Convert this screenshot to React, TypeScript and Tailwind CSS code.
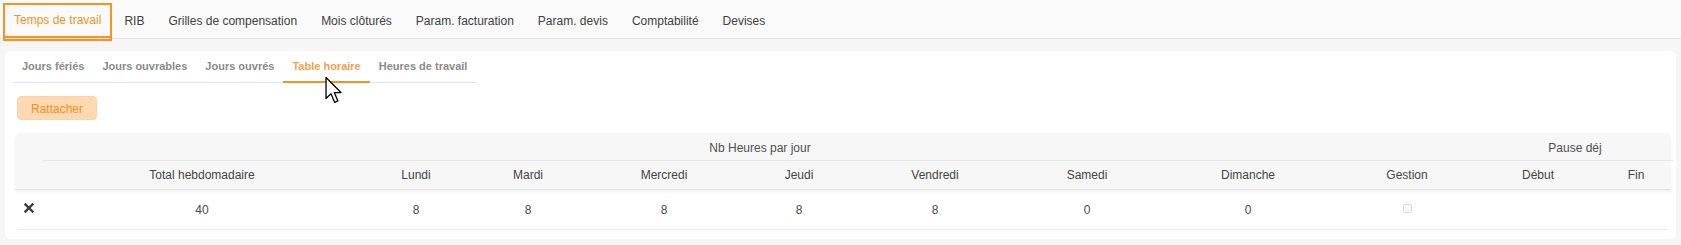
import { useState } from 'react';

const topTabs = ['RIB', 'Grilles de compensation', 'Mois clôturés', 'Param. facturation', 'Param. devis', 'Comptabilité', 'Devises'];
const subTabs = ['Jours fériés', 'Jours ouvrables', 'Jours ouvrés', 'Table horaire', 'Heures de travail'];
const days = ['Lundi', 'Mardi', 'Mercredi', 'Jeudi', 'Vendredi', 'Samedi', 'Dimanche'];
const hours = [8, 8, 8, 8, 8, 0, 0];

// widths taken from the column centres of the reference
const cols = 'grid grid-cols-[28px_318px_110px_114px_158px_112px_160px_144px_178px_140px_122px_74px]';

const Cursor = () => (
    <svg className="absolute left-[324px] top-[76px]" width="20" height="29" viewBox="0 0 13 20">
        <path d="M1 1 L1 15.5 L4.4 12.3 L7 18.2 L9.2 17.2 L6.7 11.4 L11.3 11.4 Z" fill="#fff" stroke="#000" strokeWidth="0.9" strokeLinejoin="round" />
    </svg>
);

export default function App() {
    const [active, setActive] = useState('Table horaire');

    return (
        <div className="relative min-h-[245px] bg-[#f6f6f6] font-['Liberation_Sans',Arial,sans-serif] text-[12px] text-[#444]">
            {/* top settings tabs */}
            <div className="flex h-[39px] items-start border-b border-[#e4e4e4] bg-[#fafafa] pl-[3px]">
                <div className="relative z-10 mt-[3px] h-[38px] border-2 border-[#f7931e] pb-px">
                    <span className="flex h-full items-center border-b-[2px] border-[#f7931e] px-[9px] pb-[2px] font-medium text-[#f39322]">
                        Temps de travail
                    </span>
                </div>
                {topTabs.map(t => (
                    <span key={t} className="flex h-[38px] items-center px-3 pt-[3px] text-[#404040]">{t}</span>
                ))}
            </div>

            <div className="px-[5px] pt-3 pb-[7px]">
                <div className="rounded-md bg-white pl-2 pr-[5px] pb-[9px]">
                    {/* sub tabs */}
                    <div className="inline-flex border-b border-[#e3e3e3]">
                        {subTabs.map(t => (
                            <button
                                key={t}
                                onClick={() => setActive(t)}
                                className={`-mb-px flex h-[32px] items-center px-[9px] pt-px text-[11px] font-bold ${
                                    t === active ? 'border-b-2 border-[#f7931e] text-[#f5a04b]' : 'border-b-2 border-transparent text-[#8a8a8a]'
                                }`}
                            >
                                {t}
                            </button>
                        ))}
                    </div>

                    <div className="ml-[4px] mt-[13px]">
                        <button className="h-[24px] rounded-[4px] border border-[#fdd3a6] bg-[#fed9b2] px-[13px] pt-px text-[12px] text-[#f3901c]">
                            Rattacher
                        </button>
                    </div>

                    {/* hours table */}
                    <div className="ml-[2px] mt-[13px]">
                        <div className="rounded-t-md border-b border-[#e2e2e2] bg-[#f7f7f7] shadow-[0_2px_3px_rgba(0,0,0,0.05)]">
                            <div className={`${cols} grid-rows-[28px_28px]`}>
                                <div className="row-span-2" />
                                <div className="col-span-9 flex items-center justify-center border-b border-[#e6e6e6] pt-[2px] text-[#505050]">Nb Heures par jour</div>
                                <div className="col-span-2 flex items-center justify-center border-b border-[#e6e6e6] pt-[2px] text-[#505050]">Pause déj</div>
                                <div className="flex items-center justify-center">Total hebdomadaire</div>
                                {days.map(d => (
                                    <div key={d} className="flex items-center justify-center">{d}</div>
                                ))}
                                <div className="flex items-center justify-center">Gestion</div>
                                <div className="flex items-center justify-center">Début</div>
                                <div className="flex items-center justify-center">Fin</div>
                            </div>
                        </div>

                        <div className={`${cols} h-[39px] items-center text-[#4a4a4a]`}>
                            <div className="flex justify-center pb-[3px]">
                                <svg width="10" height="10" viewBox="0 0 10 10">
                                    <path d="M1.5 1.5 L8.5 8.5 M8.5 1.5 L1.5 8.5" stroke="#3d3d3d" strokeWidth="2.4" strokeLinecap="square" />
                                </svg>
                            </div>
                            <div className="text-center">40</div>
                            {hours.map((h, i) => (
                                <div key={days[i]} className="text-center">{h}</div>
                            ))}
                            <div className="flex justify-center pb-[3px]">
                                <span className="h-[9px] w-[9px] rounded-[2px] border border-[#dcdcdc] bg-[#f8f8f8]" />
                            </div>
                            <div />
                            <div />
                        </div>
                        <div className="mx-[3px] h-px bg-[#ececec]" />
                    </div>
                </div>
            </div>

            <Cursor />
        </div>
    );
}
